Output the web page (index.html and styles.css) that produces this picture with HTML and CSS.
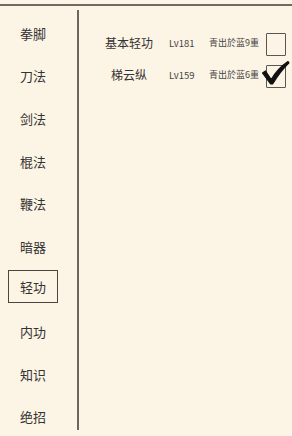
FILE: index.html
```html
<!DOCTYPE html>
<html lang="zh">
<head>
  <meta charset="UTF-8" />
  <meta name="viewport" content="width=device-width, initial-scale=1.0" />
  <title>轻功</title>
  <link rel="stylesheet" href="styles.css">
</head>
<body>
  <div class="screen">
    <div class="layout">
      <ul class="sidebar">
        <li class="menu-item"><span class="label">拳脚</span></li>
        <li class="menu-item"><span class="label">刀法</span></li>
        <li class="menu-item"><span class="label">剑法</span></li>
        <li class="menu-item"><span class="label">棍法</span></li>
        <li class="menu-item"><span class="label">鞭法</span></li>
        <li class="menu-item"><span class="label">暗器</span></li>
        <li class="menu-item active"><span class="label">轻功</span></li>
        <li class="menu-item"><span class="label">内功</span></li>
        <li class="menu-item"><span class="label">知识</span></li>
        <li class="menu-item"><span class="label">绝招</span></li>
      </ul>

      <div class="skills">
        <div class="skill-row">
          <span class="skill-name">基本轻功</span>
          <span class="skill-level">Lv181</span>
          <span class="skill-tier">青出於蓝9重</span>
          <span class="check-box"></span>
        </div>
        <div class="skill-row">
          <span class="skill-name">梯云纵</span>
          <span class="skill-level">Lv159</span>
          <span class="skill-tier">青出於蓝6重</span>
          <span class="check-box checked">
            <svg class="check-mark" width="30" height="30" viewBox="0 0 30 30">
              <path d="M1.5 14 L4.5 12 L10.2 20.5 Q17 9 27 2.5 L28 3.8 Q19.5 12 11.6 25 L9.6 25 Z" fill="#111" stroke="#111" stroke-width="1.2" stroke-linejoin="round"/>
            </svg>
          </span>
        </div>
      </div>
    </div>
  </div>
</body>
</html>
```

FILE: styles.css
```css
* {
  box-sizing: border-box;
}
html, body {
  margin: 0;
  padding: 0;
  height: 100%;
  overflow: hidden;
}
body {
  background: #fcf4e4;
  color: #333;
  font-family: "Noto Sans CJK SC", "Noto Sans", sans-serif;
}
.screen {
  padding-top: 4px;
}
.layout {
  display: flex;
  border-top: 2px solid #6e6a63;
  padding-top: 4px;
}

/* left category list */
.sidebar {
  list-style: none;
  margin: 0;
  padding: 2px 0 0 0;
  width: 79px;
  height: 420px;
  border-right: 2px solid #6b665e;
}
.menu-item {
  height: 42.6px;
  display: flex;
  align-items: center;
  padding-left: 8px;
}
.menu-item .label {
  display: block;
  width: 50px;
  height: 33px;
  line-height: 31px;
  text-align: center;
  font-size: 13px;
  border: 1.5px solid transparent;
}
.menu-item.active .label {
  border-color: #4a4740;
  margin-top: -5px;
}

/* skill table */
.skills {
  flex: 1;
  padding: 18px 0 0 10px;
}
.skill-row {
  display: flex;
  align-items: center;
  height: 32px;
}
.skill-name {
  width: 80px;
  text-align: center;
  font-size: 12px;
  margin-top: -3px;
}
.skill-level {
  width: 40px;
  font-size: 9.5px;
  color: #444;
  margin-top: -3px;
}
.skill-tier {
  width: 57px;
  font-size: 9px;
  color: #444;
  margin-top: -3px;
}
.check-box {
  position: relative;
  width: 20px;
  height: 23px;
  border: 1.5px solid #5a5650;
  border-radius: 1px;
}
.check-mark {
  position: absolute;
  left: -6px;
  top: -7px;
}
```
